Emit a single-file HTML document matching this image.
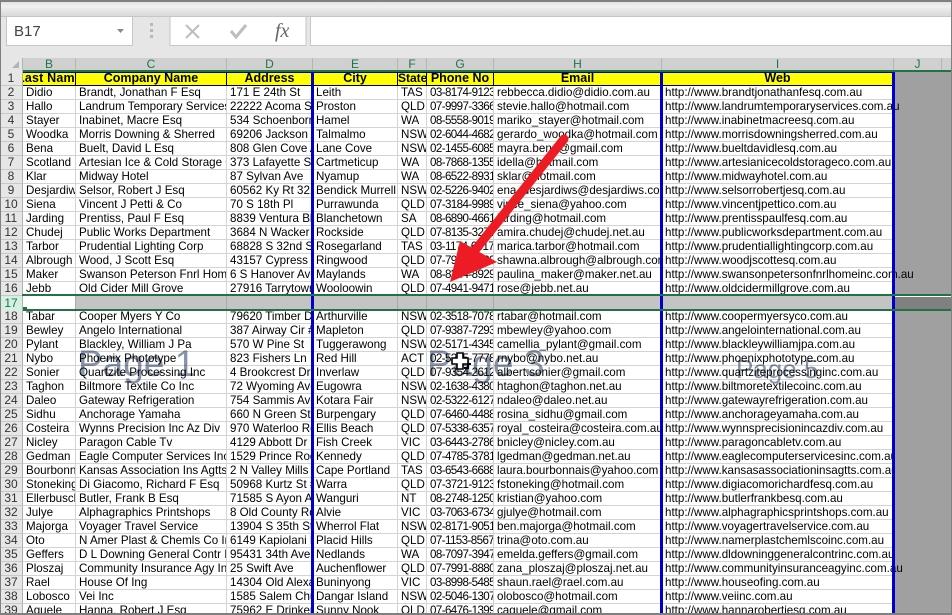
<!DOCTYPE html>
<html><head><meta charset="utf-8"><style>
html,body{margin:0;padding:0;background:#a0a0a0}
#p{position:relative;width:952px;height:615px;overflow:hidden;background:#a0a0a0;font-family:"Liberation Sans",sans-serif;color:#000}
.a{position:absolute}
table{position:absolute;left:0;top:72px;width:894px;table-layout:fixed;border-collapse:separate;border-spacing:0;font-size:11.6px;line-height:13px;background:#fff}
td,th{height:13px;padding:0 0 0 3px;border-right:1px solid #d4d4d4;border-bottom:1px solid #d4d4d4;white-space:nowrap;overflow:hidden;font-weight:normal;text-align:left;box-sizing:content-box}
th{padding:0;text-align:center;background:#e6e6e6;border-right:1px solid #b0b0b0;border-bottom:1px solid #c8c8c8;color:#333;font-size:12px}
td:nth-child(7){letter-spacing:-.6px}
tr.h td{background:#ff0;font-weight:bold;text-align:center;padding:0;border-right:1px solid #000;border-bottom:1px solid #000;font-size:12.5px;letter-spacing:0}
td.o{overflow:visible}
tr.s td{background:#c4c4c4;border-right:1px solid #aaa;border-bottom:0}
tr.s td.w{background:#fff}
tr.s th{background:#d3f0e0;color:#217346;border-bottom:0}
.ch{position:absolute;top:58px;height:12px;background:#d0d0d0;border-right:1px solid #b5b5b5;color:#217346;font-size:12px;line-height:13px;text-align:center;box-sizing:border-box}
.bl{position:absolute;background:#0000cc}
.g{position:absolute;background:#217346}
.pg{position:absolute;color:rgba(105,120,145,.8);white-space:nowrap;line-height:1;mix-blend-mode:multiply}
</style></head><body><div id="p">
<div class="a" style="left:0;top:0;width:952px;height:58px;background:#e6e6e6"></div>
<div class="a" style="left:0;top:2px;width:952px;height:14px;background:linear-gradient(#e2e2e2,#f0f0f0 30%,#d8d8d8)"></div>
<div class="a" style="left:0;top:16px;width:952px;height:1px;background:#c6c6c6"></div>
<div class="a" style="left:6px;top:16px;width:127px;height:30px;background:#fff;border:1px solid #c6c6c6;box-sizing:border-box;font-size:15px;line-height:30px;padding-left:7px;color:#444">B17</div>
<svg class="a" style="left:0;top:0" width="320" height="58">
<polygon points="117,29 124,29 120.5,33" fill="#8a8a8a"/>
<rect x="150" y="23" width="3" height="3" fill="#b8b8b8"/><rect x="150" y="29" width="3" height="3" fill="#b8b8b8"/><rect x="150" y="35" width="3" height="3" fill="#b8b8b8"/>
<rect x="170" y="16.5" width="136" height="29" fill="#fff" stroke="#c6c6c6"/>
<path d="M186 25L199 38M199 25L186 38" stroke="#bdbdbd" stroke-width="2" fill="none"/>
<path d="M231 31L236 37L246 25" stroke="#bdbdbd" stroke-width="3" fill="none"/>
<text x="275" y="37" font-family="Liberation Serif,serif" font-style="italic" font-size="20" fill="#666">fx</text>
</svg>
<div class="a" style="left:310px;top:16px;width:642px;height:30px;background:#fff;border:1px solid #c6c6c6;box-sizing:border-box"></div>

<div class="a" style="left:0;top:58px;width:23px;height:14px;background:#e6e6e6;border-right:1px solid #b5b5b5;box-sizing:border-box"></div>
<svg class="a" style="left:0;top:58px" width="23" height="14"><polygon points="19,3 19,10 12,10" fill="#b4b4b4"/></svg>
<div class="ch" style="left:23px;width:53px">B</div>
<div class="ch" style="left:76px;width:151px">C</div>
<div class="ch" style="left:227px;width:86px">D</div>
<div class="ch" style="left:313px;width:85px">E</div>
<div class="ch" style="left:398px;width:29px">F</div>
<div class="ch" style="left:427px;width:67px">G</div>
<div class="ch" style="left:494px;width:168px">H</div>
<div class="ch" style="left:662px;width:232px">I</div>
<div class="ch" style="left:894px;width:48px">J</div>
<div class="ch" style="left:942px;width:10px;border-right:0"></div>
<div class="g" style="left:23px;top:70px;width:929px;height:2px"></div>

<table>
<colgroup><col style="width:23px"><col style="width:53px"><col style="width:151px"><col style="width:86px"><col style="width:85px"><col style="width:29px"><col style="width:67px"><col style="width:168px"><col style="width:232px"></colgroup>
<tr class="h"><th style="font-weight:normal;border-bottom:1px solid #c8c8c8;background:#e6e6e6;text-align:center">1</th><td style="text-align:left;text-indent:-6px;letter-spacing:.2px">Last Name</td><td>Company Name</td><td>Address</td><td>City</td><td style="text-align:left;font-size:12px">State</td><td>Phone No</td><td>Email</td><td>Web</td></tr>
<tr><th>2</th><td>Didio</td><td>Brandt, Jonathan F Esq</td><td>171 E 24th St</td><td>Leith</td><td>TAS</td><td>03-8174-9123</td><td>rebbecca.didio@didio.com.au</td><td>http://www.brandtjonathanfesq.com.au</td></tr>
<tr><th>3</th><td>Hallo</td><td>Landrum Temporary Services</td><td>22222 Acoma St</td><td>Proston</td><td>QLD</td><td>07-9997-3366</td><td>stevie.hallo@hotmail.com</td><td class="o">http://www.landrumtemporaryservices.com.au</td></tr>
<tr><th>4</th><td>Stayer</td><td>Inabinet, Macre Esq</td><td>534 Schoenborn St</td><td>Hamel</td><td>WA</td><td>08-5558-9019</td><td>mariko_stayer@hotmail.com</td><td>http://www.inabinetmacreesq.com.au</td></tr>
<tr><th>5</th><td>Woodka</td><td>Morris Downing &amp; Sherred</td><td>69206 Jackson Ave</td><td>Talmalmo</td><td>NSW</td><td>02-6044-4682</td><td>gerardo_woodka@hotmail.com</td><td>http://www.morrisdowningsherred.com.au</td></tr>
<tr><th>6</th><td>Bena</td><td>Buelt, David L Esq</td><td>808 Glen Cove Ave</td><td>Lane Cove</td><td>NSW</td><td>02-1455-6085</td><td>mayra.bena@gmail.com</td><td>http://www.bueltdavidlesq.com.au</td></tr>
<tr><th>7</th><td>Scotland</td><td>Artesian Ice &amp; Cold Storage Co</td><td>373 Lafayette St</td><td>Cartmeticup</td><td>WA</td><td>08-7868-1355</td><td>idella@hotmail.com</td><td>http://www.artesianicecoldstorageco.com.au</td></tr>
<tr><th>8</th><td>Klar</td><td>Midway Hotel</td><td>87 Sylvan Ave</td><td>Nyamup</td><td>WA</td><td>08-6522-8931</td><td>sklar@hotmail.com</td><td>http://www.midwayhotel.com.au</td></tr>
<tr><th>9</th><td>Desjardiws</td><td>Selsor, Robert J Esq</td><td>60562 Ky Rt 321</td><td>Bendick Murrell</td><td>NSW</td><td>02-5226-9402</td><td>ena_desjardiws@desjardiws.com.au</td><td>http://www.selsorrobertjesq.com.au</td></tr>
<tr><th>10</th><td>Siena</td><td>Vincent J Petti &amp; Co</td><td>70 S 18th Pl</td><td>Purrawunda</td><td>QLD</td><td>07-3184-9989</td><td>vince_siena@yahoo.com</td><td>http://www.vincentjpettico.com.au</td></tr>
<tr><th>11</th><td>Jarding</td><td>Prentiss, Paul F Esq</td><td>8839 Ventura Blvd</td><td>Blanchetown</td><td>SA</td><td>08-6890-4661</td><td>jarding@hotmail.com</td><td>http://www.prentisspaulfesq.com.au</td></tr>
<tr><th>12</th><td>Chudej</td><td>Public Works Department</td><td>3684 N Wacker Dr</td><td>Rockside</td><td>QLD</td><td>07-8135-3271</td><td>amira.chudej@chudej.net.au</td><td>http://www.publicworksdepartment.com.au</td></tr>
<tr><th>13</th><td>Tarbor</td><td>Prudential Lighting Corp</td><td>68828 S 32nd St #6</td><td>Rosegarland</td><td>TAS</td><td>03-1174-6817</td><td>marica.tarbor@hotmail.com</td><td>http://www.prudentiallightingcorp.com.au</td></tr>
<tr><th>14</th><td>Albrough</td><td>Wood, J Scott Esq</td><td>43157 Cypress St</td><td>Ringwood</td><td>QLD</td><td>07-7977-6039</td><td>shawna.albrough@albrough.com.au</td><td>http://www.woodjscottesq.com.au</td></tr>
<tr><th>15</th><td>Maker</td><td>Swanson Peterson Fnrl Home Inc</td><td>6 S Hanover Ave</td><td>Maylands</td><td>WA</td><td>08-8344-8929</td><td>paulina_maker@maker.net.au</td><td class="o">http://www.swansonpetersonfnrlhomeinc.com.au</td></tr>
<tr><th>16</th><td>Jebb</td><td>Old Cider Mill Grove</td><td>27916 Tarrytown Rd</td><td>Wooloowin</td><td>QLD</td><td>07-4941-9471</td><td>rose@jebb.net.au</td><td>http://www.oldcidermillgrove.com.au</td></tr>
<tr class="s"><th style="height:14px">17</th><td class="w" style="height:14px"></td><td></td><td></td><td></td><td></td><td></td><td></td><td></td></tr>
<tr><th>18</th><td>Tabar</td><td>Cooper Myers Y Co</td><td>79620 Timber Dr</td><td>Arthurville</td><td>NSW</td><td>02-3518-7078</td><td>rtabar@hotmail.com</td><td>http://www.coopermyersyco.com.au</td></tr>
<tr><th>19</th><td>Bewley</td><td>Angelo International</td><td>387 Airway Cir #62</td><td>Mapleton</td><td>QLD</td><td>07-9387-7293</td><td>mbewley@yahoo.com</td><td>http://www.angelointernational.com.au</td></tr>
<tr><th>20</th><td>Pylant</td><td>Blackley, William J Pa</td><td>570 W Pine St</td><td>Tuggerawong</td><td>NSW</td><td>02-5171-4345</td><td>camellia_pylant@gmail.com</td><td>http://www.blackleywilliamjpa.com.au</td></tr>
<tr><th>21</th><td>Nybo</td><td>Phoenix Phototype</td><td>823 Fishers Ln</td><td>Red Hill</td><td>ACT</td><td>02-5225-7778</td><td>rnybo@nybo.net.au</td><td>http://www.phoenixphototype.com.au</td></tr>
<tr><th>22</th><td>Sonier</td><td>Quartzite Processing Inc</td><td>4 Brookcrest Dr</td><td>Inverlaw</td><td>QLD</td><td>07-9354-2612</td><td>albert.sonier@gmail.com</td><td>http://www.quartziteprocessinginc.com.au</td></tr>
<tr><th>23</th><td>Taghon</td><td>Biltmore Textile Co Inc</td><td>72 Wyoming Ave</td><td>Eugowra</td><td>NSW</td><td>02-1638-4380</td><td>htaghon@taghon.net.au</td><td>http://www.biltmoretextilecoinc.com.au</td></tr>
<tr><th>24</th><td>Daleo</td><td>Gateway Refrigeration</td><td>754 Sammis Ave</td><td>Kotara Fair</td><td>NSW</td><td>02-5322-6127</td><td>ndaleo@daleo.net.au</td><td>http://www.gatewayrefrigeration.com.au</td></tr>
<tr><th>25</th><td>Sidhu</td><td>Anchorage Yamaha</td><td>660 N Green St</td><td>Burpengary</td><td>QLD</td><td>07-6460-4488</td><td>rosina_sidhu@gmail.com</td><td>http://www.anchorageyamaha.com.au</td></tr>
<tr><th>26</th><td>Costeira</td><td>Wynns Precision Inc Az Div</td><td>970 Waterloo Rd</td><td>Ellis Beach</td><td>QLD</td><td>07-5338-6357</td><td>royal_costeira@costeira.com.au</td><td>http://www.wynnsprecisionincazdiv.com.au</td></tr>
<tr><th>27</th><td>Nicley</td><td>Paragon Cable Tv</td><td>4129 Abbott Dr</td><td>Fish Creek</td><td>VIC</td><td>03-6443-2786</td><td>bnicley@nicley.com.au</td><td>http://www.paragoncabletv.com.au</td></tr>
<tr><th>28</th><td>Gedman</td><td>Eagle Computer Services Inc</td><td>1529 Prince Rodgers Ave</td><td>Kennedy</td><td>QLD</td><td>07-4785-3781</td><td>lgedman@gedman.net.au</td><td>http://www.eaglecomputerservicesinc.com.au</td></tr>
<tr><th>29</th><td>Bourbonnais</td><td>Kansas Association Ins Agtts</td><td>2 N Valley Mills Dr</td><td>Cape Portland</td><td>TAS</td><td>03-6543-6688</td><td>laura.bourbonnais@yahoo.com</td><td>http://www.kansasassociationinsagtts.com.au</td></tr>
<tr><th>30</th><td>Stoneking</td><td>Di Giacomo, Richard F Esq</td><td>50968 Kurtz St #2</td><td>Warra</td><td>QLD</td><td>07-3721-9123</td><td>fstoneking@hotmail.com</td><td>http://www.digiacomorichardfesq.com.au</td></tr>
<tr><th>31</th><td>Ellerbusch</td><td>Butler, Frank B Esq</td><td>71585 S Ayon Ave</td><td>Wanguri</td><td>NT</td><td>08-2748-1250</td><td>kristian@yahoo.com</td><td>http://www.butlerfrankbesq.com.au</td></tr>
<tr><th>32</th><td>Julye</td><td>Alphagraphics Printshops</td><td>8 Old County Rd #3</td><td>Alvie</td><td>VIC</td><td>03-7063-6734</td><td>gjulye@hotmail.com</td><td>http://www.alphagraphicsprintshops.com.au</td></tr>
<tr><th>33</th><td>Majorga</td><td>Voyager Travel Service</td><td>13904 S 35th St</td><td>Wherrol Flat</td><td>NSW</td><td>02-8171-9051</td><td>ben.majorga@hotmail.com</td><td>http://www.voyagertravelservice.com.au</td></tr>
<tr><th>34</th><td>Oto</td><td>N Amer Plast &amp; Chemls Co Inc</td><td>6149 Kapiolani Blvd</td><td>Placid Hills</td><td>QLD</td><td>07-1153-8567</td><td>trina@oto.com.au</td><td>http://www.namerplastchemlscoinc.com.au</td></tr>
<tr><th>35</th><td>Geffers</td><td>D L Downing General Contr Inc</td><td>95431 34th Ave #62</td><td>Nedlands</td><td>WA</td><td>08-7097-3947</td><td>emelda.geffers@gmail.com</td><td>http://www.dldowninggeneralcontrinc.com.au</td></tr>
<tr><th>36</th><td>Ploszaj</td><td>Community Insurance Agy Inc</td><td>25 Swift Ave</td><td>Auchenflower</td><td>QLD</td><td>07-7991-8880</td><td>zana_ploszaj@ploszaj.net.au</td><td class="o">http://www.communityinsuranceagyinc.com.au</td></tr>
<tr><th>37</th><td>Rael</td><td>House Of Ing</td><td>14304 Old Alexandria</td><td>Buninyong</td><td>VIC</td><td>03-8998-5485</td><td>shaun.rael@rael.com.au</td><td>http://www.houseofing.com.au</td></tr>
<tr><th>38</th><td>Lobosco</td><td>Vei Inc</td><td>1585 Salem Church Rd</td><td>Dangar Island</td><td>NSW</td><td>02-5046-1307</td><td>olobosco@hotmail.com</td><td>http://www.veiinc.com.au</td></tr>
<tr><th>39</th><td>Aguele</td><td>Hanna, Robert J Esq</td><td>75962 E Drinker St</td><td>Sunny Nook</td><td>QLD</td><td>07-6476-1399</td><td>caguele@gmail.com</td><td>http://www.hannarobertjesq.com.au</td></tr>
</table>

<div class="a" style="left:895px;top:296px;width:57px;height:14px;background:#808080"></div>

<div class="pg" style="left:78px;top:345px;font-size:37px">Page 1</div>
<div class="pg" style="left:427px;top:345px;font-size:37px">Page 3</div>
<div class="pg" style="left:736px;top:356px;font-size:26px">Page 5</div>

<div class="bl" style="left:23px;top:72px;width:871px;height:1px"></div>
<div class="bl" style="left:311px;top:72px;width:3px;height:543px"></div>
<div class="bl" style="left:660px;top:72px;width:3px;height:543px"></div>
<div class="bl" style="left:892px;top:72px;width:3px;height:543px"></div>

<div class="g" style="left:22px;top:294px;width:930px;height:2px"></div>
<div class="g" style="left:27px;top:309px;width:925px;height:2px"></div>
<div class="a" style="left:895px;top:296px;width:57px;height:1px;background:#fff"></div>
<div class="g" style="left:23px;top:307px;width:4px;height:4px"></div>

<svg class="a" style="left:0;top:0" width="952" height="615">
<path d="M564 139L472 254" stroke="#ed1c24" stroke-width="9" stroke-linecap="round" fill="none"/>
<polygon points="450,282 460,241 497,262" fill="#ed1c24"/>
<path d="M457 353h6v5h5v6h-5v5h-6v-5h-5v-6h5z" fill="#fff" stroke="#000" stroke-width="1.6"/>
<path d="M464 368h4v-4h3" fill="none" stroke="#000" stroke-width="2"/>
</svg>

<div class="a" style="left:0;top:0;width:952px;height:2px;background:#808080"></div>
<div class="a" style="left:0;top:0;width:1px;height:615px;background:#808080"></div>
<div class="a" style="left:951px;top:0;width:1px;height:615px;background:#808080"></div>
<div class="a" style="left:0;top:613px;width:952px;height:2px;background:#808080"></div>
</div></body></html>
